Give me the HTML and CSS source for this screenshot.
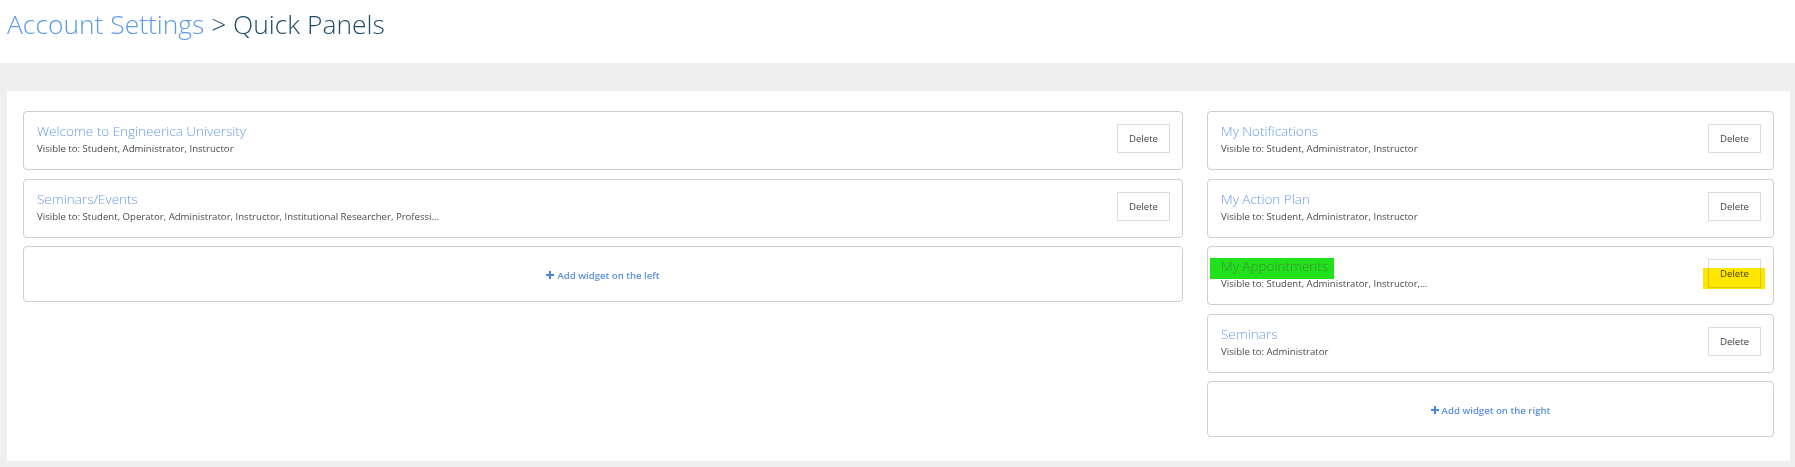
FILE: index.html
```html
<!DOCTYPE html>
<html>
<head>
<meta charset="utf-8">
<link rel="stylesheet" href="styles.css">
</head>
<body>
<header class="page-header">
  <h1 class="crumbs"><span class="crumb-link">Account Settings</span> <span class="crumb-current">&gt; Quick Panels</span></h1>
</header>
<main class="page-body">
  <section class="panel">
    <div class="column">
      <div class="widget">
        <div class="widget-info">
          <div class="widget-title">Welcome to Engineerica University</div>
          <div class="widget-visible">Visible to: Student, Administrator, Instructor</div>
        </div>
        <button class="delete-btn">Delete</button>
      </div>
      <div class="widget">
        <div class="widget-info">
          <div class="widget-title">Seminars/Events</div>
          <div class="widget-visible">Visible to: Student, Operator, Administrator, Instructor, Institutional Researcher, Professi...</div>
        </div>
        <button class="delete-btn">Delete</button>
      </div>
      <div class="add-widget">
        <svg class="plus" viewBox="0 0 10 10" width="8" height="8"><path d="M3.7 0h2.6v3.7H10v2.6H6.3V10H3.7V6.3H0V3.7h3.7z" fill="currentColor"/></svg>
        <span>Add widget on the left</span>
      </div>
    </div>
    <div class="column">
      <div class="widget">
        <div class="widget-info">
          <div class="widget-title">My Notifications</div>
          <div class="widget-visible">Visible to: Student, Administrator, Instructor</div>
        </div>
        <button class="delete-btn">Delete</button>
      </div>
      <div class="widget">
        <div class="widget-info">
          <div class="widget-title">My Action Plan</div>
          <div class="widget-visible">Visible to: Student, Administrator, Instructor</div>
        </div>
        <button class="delete-btn">Delete</button>
      </div>
      <div class="widget">
        <div class="mark-green"></div>
        <div class="widget-info">
          <div class="widget-title title-marked">My Appointments</div>
          <div class="widget-visible">Visible to: Student, Administrator, Instructor,...</div>
        </div>
        <button class="delete-btn">Delete</button>
        <div class="mark-yellow"></div>
      </div>
      <div class="widget">
        <div class="widget-info">
          <div class="widget-title">Seminars</div>
          <div class="widget-visible">Visible to: Administrator</div>
        </div>
        <button class="delete-btn">Delete</button>
      </div>
      <div class="add-widget">
        <svg class="plus" viewBox="0 0 10 10" width="8" height="8"><path d="M3.7 0h2.6v3.7H10v2.6H6.3V10H3.7V6.3H0V3.7h3.7z" fill="currentColor"/></svg>
        <span>Add widget on the right</span>
      </div>
    </div>
  </section>
</main>
</body>
</html>
```
FILE: styles.css
```css
* { box-sizing: border-box; }
html, body {
  margin: 0;
  padding: 0;
  background: #fff;
  font-family: "Open Sans", "Noto Sans", sans-serif;
}
.page-header {
  height: 63px;
  padding: 4px 7px 0;
  background: #fff;
}
.crumbs {
  margin: 0;
  font-size: 26.4px;
  line-height: 40px;
  font-weight: 300;
  white-space: nowrap;
}
.crumb-link { color: #5d9be8; }
.crumb-current { color: #1e4d6b; }

.page-body {
  background: #efefef;
  padding: 28px 5px 6px 7px;
  height: 404px;
}
.panel {
  background: #fff;
  height: 370px;
  padding: 20px 16px 0;
  display: grid;
  grid-template-columns: minmax(0, 1160fr) minmax(0, 567fr);
  column-gap: 24px;
  align-items: start;
}
.column {
  display: flex;
  flex-direction: column;
  gap: 8.5px;
}
.widget {
  position: relative;
  display: flex;
  align-items: flex-start;
  justify-content: space-between;
  border: 1px solid #cfcfcf;
  border-radius: 4px;
  padding: 9px 12px 13px 13px;
  height: 59px;
}
.widget-info {
  min-width: 0;
  position: relative;
  z-index: 1;
}
.widget-title {
  font-size: 13.5px;
  line-height: 20px;
  font-weight: 300;
  color: #6a9be8;
  margin-bottom: 1px;
  white-space: nowrap;
}
.widget-visible {
  font-size: 9.6px;
  line-height: 14px;
  color: #4a4a4a;
  white-space: nowrap;
}
.delete-btn {
  margin-top: 3px;
  width: 53px;
  height: 29px;
  padding: 0;
  background: #fff;
  border: 1px solid #dcdcdc;
  border-radius: 0;
  font-family: "Open Sans", "Noto Sans", sans-serif;
  font-size: 9.6px;
  color: #444;
  flex: none;
}
.add-widget {
  height: 56px;
  border: 1px solid #cfcfcf;
  border-radius: 4px;
  display: flex;
  align-items: center;
  justify-content: center;
  gap: 3px;
  font-size: 9.6px;
  font-weight: 600;
  color: #5b8fe2;
  padding-top: 2px;
}
.plus { color: #4a86dc; }

.mark-green {
  position: absolute;
  left: 2px;
  top: 11px;
  width: 124px;
  height: 21px;
  background: #22e01c;
}
.title-marked { color: #3b9231; }
.mark-yellow {
  position: absolute;
  right: 8px;
  top: 21px;
  width: 62px;
  height: 21px;
  background: #ffe600;
  mix-blend-mode: multiply;
}
```
